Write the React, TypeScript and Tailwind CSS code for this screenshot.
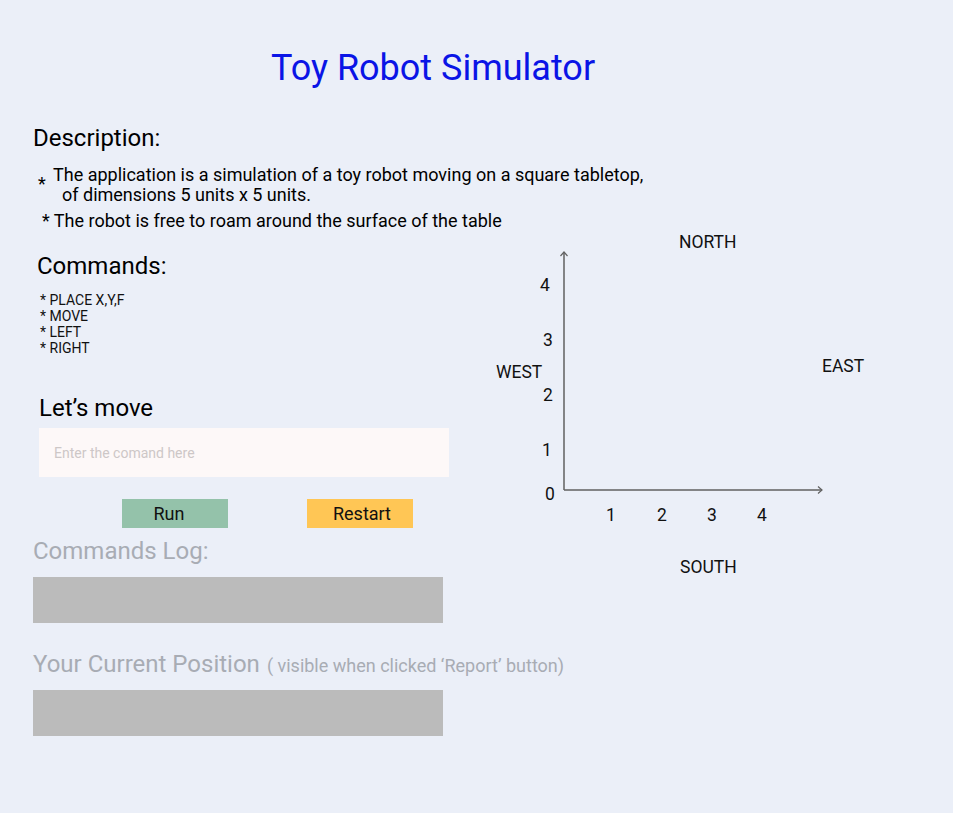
import React from 'react';

const yLabels = [
  { v: '4', left: 'left-[70px]', top: 'top-[44px]' },
  { v: '3', left: 'left-[73px]', top: 'top-[99px]' },
  { v: '2', left: 'left-[73px]', top: 'top-[154px]' },
  { v: '1', left: 'left-[72px]', top: 'top-[209px]' },
  { v: '0', left: 'left-[75px]', top: 'top-[253px]' },
];

const xLabels = [
  { v: '1', left: 'left-[136px]' },
  { v: '2', left: 'left-[187px]' },
  { v: '3', left: 'left-[237px]' },
  { v: '4', left: 'left-[287px]' },
];

function Board() {
  return (
    <div className="relative h-[360px] w-[420px] text-[17.5px] leading-[20px] text-[#111]">
      <svg className="absolute left-0 top-0" width="420" height="360" fill="none" stroke="#606060" strokeWidth="1.5">
        <line x1="94" y1="21" x2="94" y2="259" />
        <line x1="94" y1="259" x2="352" y2="259" />
        <polyline points="90.5,25 94,21 97.5,25" strokeWidth="1.2" />
        <polyline points="348,255.5 352,259 348,262.5" strokeWidth="1.2" />
      </svg>
      <span className="absolute left-[209px] top-[1px]">NORTH</span>
      <span className="absolute left-[210px] top-[326px]">SOUTH</span>
      <span className="absolute left-[26px] top-[131px]">WEST</span>
      <span className="absolute left-[352px] top-[125px]">EAST</span>
      {yLabels.map((l) => (
        <span key={'y' + l.v} className={`absolute ${l.left} ${l.top}`}>
          {l.v}
        </span>
      ))}
      {xLabels.map((l) => (
        <span key={'x' + l.v} className={`absolute ${l.left} top-[274px]`}>
          {l.v}
        </span>
      ))}
    </div>
  );
}

export default function App() {
  return (
    <div className="min-h-screen w-full bg-[#ebeff8] pb-10 font-['Roboto',sans-serif] text-black">
      <h1 className="mt-0 w-[866px] pt-[46px] text-center text-[36px] font-normal leading-[44px] text-[#0a14e6]">
        Toy Robot Simulator
      </h1>

      <div className="px-[33px]">
        <h2 className="mt-[34px] text-[24px] leading-[28px]">Description:</h2>

        <div className="mt-[13px] flex text-[18px] leading-[20px]">
          <span className="ml-[5px] w-[15px] pt-[9px]">*</span>
          <div>
            <p className="whitespace-nowrap">The application is a simulation of a toy robot moving on a square tabletop,</p>
            <p className="pl-[9px]">of dimensions 5 units x 5 units.</p>
          </div>
        </div>
        <p className="ml-[9px] mt-[6px] text-[18px] leading-[20px]">* The robot is free to roam around the surface of the table</p>

        <div className="flex">
          <div className="w-[437px] shrink-0">
            <h2 className="ml-[4px] mt-[21px] text-[24px] leading-[28px]">Commands:</h2>
            <ul className="ml-[7px] mt-[12px] text-[14px] leading-[16px] text-[#111]">
              <li>* PLACE X,Y,F</li>
              <li>* MOVE</li>
              <li>* LEFT</li>
              <li>* RIGHT</li>
            </ul>

            <h3 className="ml-[6px] mt-[38px] text-[24px] leading-[28px]">Let’s move</h3>
            <input
              className="ml-[6px] mt-[6px] block h-[49px] w-[410px] bg-[#fdf8f8] px-[15px] text-[14px] outline-none placeholder:text-[#cdc7c7]"
              placeholder="Enter the comand here"
            />

            <div className="ml-[89px] mt-[22px] flex gap-[79px]">
              <button className="h-[29px] w-[106px] pr-[12px] text-[18px] text-[#111] bg-[#94c2aa]">Run</button>
              <button className="h-[29px] w-[106px] pl-[4px] text-[18px] text-[#111] bg-[#ffc655]">Restart</button>
            </div>

            <h3 className="mt-[9px] text-[24px] leading-[28px] text-[#a8acb4]">Commands Log:</h3>
            <div className="mt-[12px] h-[46px] w-[410px] bg-[#bbbbbb]" />

            <h3 className="mt-[27px] flex h-[28px] items-baseline whitespace-nowrap text-[24px] leading-[28px] text-[#a8acb4]">
              Your Current Position
              <span className="ml-[7px] text-[18px] leading-[28px]">( visible when clicked ‘Report’ button)</span>
            </h3>
            <div className="mt-[12px] h-[46px] w-[410px] bg-[#bbbbbb]" />
          </div>

          <Board />
        </div>
      </div>
    </div>
  );
}
